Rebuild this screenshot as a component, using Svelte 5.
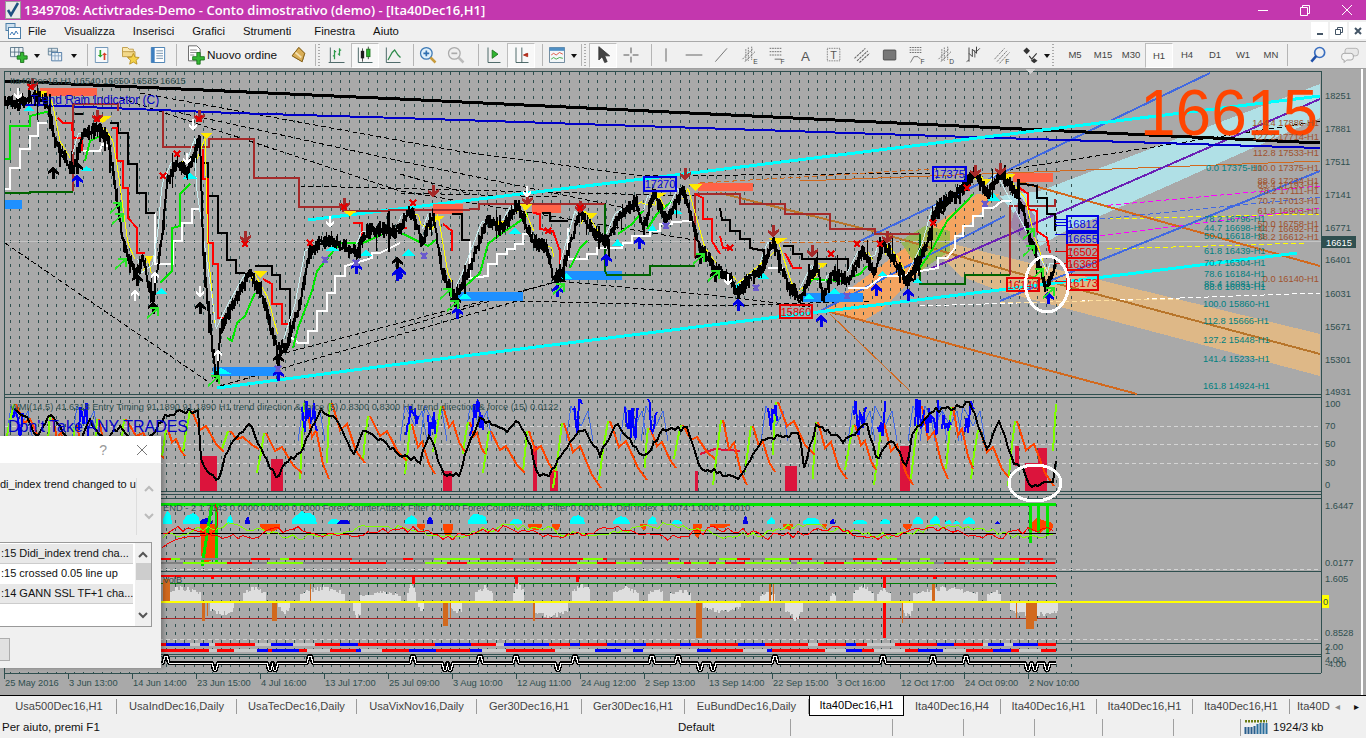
<script>
  // small seeded rng so the noisy series stay the same between renders
  function rng(seed) {
    let s = seed;
    return () => {
      s = (s + 0x6d2b79f5) | 0;
      let t = Math.imul(s ^ (s >>> 15), 1 | s);
      t = (t + Math.imul(t ^ (t >>> 7), 61 | t)) ^ t;
      return ((t ^ (t >>> 14)) >>> 0) / 4294967296;
    };
  }
  const parse = (str) => str.trim().split(/\s+/).map((p) => p.split(',').map(Number));
  function at(pts, x) {
    if (x <= pts[0][0]) return pts[0][1];
    for (let i = 1; i < pts.length; i++) {
      if (x <= pts[i][0]) {
        const [x0, y0] = pts[i - 1], [x1, y1] = pts[i];
        return y0 + ((y1 - y0) * (x - x0)) / (x1 - x0 || 1);
      }
    }
    return pts[pts.length - 1][1];
  }

  const priceKeys = parse(`5,100 20,103 30,95 47,100 55,140 73,170 83,133 100,127 108,140 113,170 123,243 137,273 143,257 153,303 157,267 163,230 167,183 177,160 187,173 200,137 203,250 208,303 217,387 220,330 233,303 250,273 263,297 277,350 287,343 300,303 310,250 330,237 357,253 367,230 400,230 407,213 413,213 422,243 433,213 443,273 455,297 467,273 487,220 503,227 517,203 533,240 547,247 553,277 563,270 580,210 593,230 607,243 620,213 637,200 643,230 653,193 667,220 683,187 700,247 715,267 730,277 737,293 750,277 763,267 773,240 787,283 800,297 817,263 823,297 833,273 848,280 863,250 875,273 883,243 893,257 907,283 927,243 937,207 960,190 975,173 987,193 1000,173 1020,197 1030,237 1037,257 1045,285 1050,280 1055,262`);

  const r1 = rng(11);
  let price = '', wicks = '', yellow = '', pale = '';
  for (let x = 5; x <= 1056; x += 1.25) {
    const y = at(priceKeys, x);
    const tall = r1() < 0.1 ? 2.4 : 1;
    price += `${x},${(y + (r1() - 0.5) * 12).toFixed(1)} `;
    const top = y - r1() * 9 * tall, bottom = y + r1() * 9 * tall;
    wicks += `M${x} ${top.toFixed(0)}V${bottom.toFixed(0)} `;
    const slope = at(priceKeys, x + 3) - at(priceKeys, x - 3);
    const off = slope > 0 ? at(priceKeys, x - 5) : at(priceKeys, x + 5);
    const cmd = Math.abs(slope) > 5 ? 'L' : 'M';
    if (slope > 0) yellow += `${cmd}${x} ${off.toFixed(1)} `;
    else pale += `${cmd}${x} ${off.toFixed(1)} `;
  }

  const steps = [
    // brown
    { c: '#a52a2a', w: 2, p: '73,190 73,103 118,103 118,110' },
    { c: '#a52a2a', w: 2, p: '163,110 163,146 209,146 209,138 254,138 254,177 299,177 299,206 343,206 343,210 377,210 400,209 462,209 479,208 479,203 605,203' },
    { c: '#a52a2a', w: 2, p: '695,257 695,193 740,193 740,203 785,203 785,213 830,213 830,228 875,228 875,233 920,233' },
    { c: '#a52a2a', w: 2, p: '1010,274 1010,205 1055,205 1055,198' },
    // dark green
    { c: '#006400', w: 2, p: '5,192 30,192 30,191 73,191' },
    { c: '#006400', w: 2, p: '605,203 605,270 607,274 650,274 650,265 695,265' },
    { c: '#006400', w: 2, p: '920,233 920,283 965,283 965,274 1010,274' },
    // white
    { c: '#fff', w: 2, p: '5,188 10,188 10,167 20,167 20,148 30,148 30,135 38,135 38,122 47,122' },
    { c: '#fff', w: 2, p: '83,150 100,150 102,143 108,145' },
    { c: '#fff', w: 2, p: '155,212 155,263 173,263 173,240 182,240 182,222 192,222 192,208 200,208' },
    { c: '#fff', w: 2, p: '290,335 298,342 308,342 308,330 317,330 317,310 327,310 327,292 335,292 335,275 345,275 345,265 372,257 372,252 380,252 390,247 400,242' },
    { c: '#fff', w: 2, p: '470,240 470,277 488,275 488,263 497,263 497,253 507,253 507,248 515,248 515,243 523,243 523,233 532,233' },
    { c: '#fff', w: 2, p: '568,227 568,258 587,258 587,253 597,253 597,247 622,247 623,242 632,242 632,235 650,235 650,230 660,230 660,223 672,223 672,221 693,220' },
    { c: '#fff', w: 2, p: '768,267 783,267' },
    { c: '#fff', w: 2, p: '848,287 867,287 883,275 902,275 920,270 938,267 938,257 947,257 955,247 955,235 963,235 963,225 973,225 973,215 983,215 983,207 993,207 1002,200 1012,200' },
    // green
    { c: '#00e600', w: 2, p: '5,158 10,158 10,125 30,125 30,115 50,110' },
    { c: '#00e600', w: 2, p: '85,160 90,140 100,135' },
    { c: '#00e600', w: 2, p: '160,282 172,270 172,227 180,225 180,193 190,183' },
    { c: '#00e600', w: 2, p: '227,337 232,340 237,322 245,315 255,292' },
    { c: '#00e600', w: 2, p: '293,347 298,327 312,290 317,270 340,242 363,242 383,233 397,230 428,245 437,238' },
    { c: '#00e600', w: 2, p: '463,287 480,272 488,243 498,235 520,220 528,213' },
    { c: '#00e600', w: 2, p: '570,267 580,247 587,240' },
    { c: '#00e600', w: 2, p: '618,233 632,223 643,210' },
    { c: '#00e600', w: 2, p: '647,228 657,213 672,200' },
    { c: '#00e600', w: 2, p: '803,290 813,278 840,280 860,273 867,265' },
    { c: '#00e600', w: 2, p: '920,267 933,247 947,220 967,200 973,193' },
    // black
    { c: '#000', w: 2, p: '75,113 83,113' },
    { c: '#000', w: 2, p: '110,122 118,122 118,132 128,132 128,163 137,163 137,192 146,192 146,212 155,212' },
    { c: '#000', w: 2, p: '200,162 208,162 208,195 218,195 218,232 227,232 227,259 236,259 236,272 245,272' },
    { c: '#000', w: 2, p: '255,265 272,265 272,274 280,274 280,288 290,288 290,333' },
    { c: '#000', w: 2, p: '452,213 462,213 462,239 470,239' },
    { c: '#000', w: 2, p: '542,212 550,212 550,220 568,220' },
    { c: '#000', w: 2, p: '720,207 722,219 730,219 730,230 740,230 740,238 750,238 750,247 765,250' },
    { c: '#000', w: 2, p: '783,245 793,245 793,253 802,253 802,258 848,258 848,270' },
    { c: '#000', w: 2, p: '1017,182 1037,185 1037,197 1047,197 1047,213 1055,213 1055,230' },
    // red
    { c: '#f00', w: 2, p: '58,117 63,122 72,122 73,137 82,137 82,150' },
    { c: '#f00', w: 2, p: '112,127 117,127 117,160 123,160 123,187 128,187 128,217 137,227 137,252 145,252' },
    { c: '#f00', w: 2, p: '203,148 203,178 208,178 208,242 213,242 213,263 218,263 218,317 227,317' },
    { c: '#f00', w: 2, p: '263,278 272,283 272,303 282,303 282,323 288,323' },
    { c: '#f00', w: 2, p: '353,222 362,222 362,237' },
    { c: '#f00', w: 2, p: '400,227 407,227' },
    { c: '#f00', w: 2, p: '443,223 452,230 452,250' },
    { c: '#f00', w: 2, p: '533,212 540,213 540,228 553,230 560,250 560,263' },
    { c: '#f00', w: 2, p: '695,193 703,197 703,218 712,218 712,240 720,253' },
    { c: '#f00', w: 2, p: '720,235 723,247 730,247' },
    { c: '#f00', w: 2, p: '785,252 793,267 802,267' },
    { c: '#f00', w: 2, p: '1017,185 1028,193 1028,208 1037,210 1037,230 1047,237 1050,252' }
  ];

  const straight = [
    { c: '#b8752a', w: 2, p: '720,192 873,230 1010,270 1320,353' },
    { c: '#d2691e', w: 2, p: '1020,181 1320,265' },
    { c: '#d2691e', w: 2, p: '827,310 1137,393' },
    { c: '#d2691e', w: 1, p: '830,313 910,390' },
    { c: '#d2691e', w: 1, p: '800,180 1320,160' },
    { c: '#4169e1', w: 2, p: '860,240 1210,72' },
    { c: '#4169e1', w: 2, p: '820,310 1005,215' },
    { c: '#4169e1', w: 2, p: '1000,300 1320,170' },
    { c: '#6a1fb5', w: 2, p: '930,268 1320,98' },
    { c: '#000', w: 3, p: '5,80 400,98 1000,127 1320,142' },
    { c: '#0000c8', w: 2, p: '10,103 233,112 400,117 1000,137 1320,147' },
    { c: '#00ffff', w: 3, p: '308,219 1320,95' },
    { c: '#00ffff', w: 3, p: '217,387 400,363 720,323 1007,288 1297,252' }
  ];

  const dashed = [
    { c: '#000', p: '5,242 207,380' },
    { c: '#000', p: '163,108 400,160 640,210' },
    { c: '#000', p: '120,97 400,190 700,240' },
    { c: '#000', p: '140,92 457,150 643,175 935,172' },
    { c: '#000', p: '400,173 470,193' },
    { c: '#000', p: '300,185 700,195' },
    { c: '#000', p: '400,192 560,196' },
    { c: '#000', p: '400,327 557,280 720,295 810,306' },
    { c: '#000', p: '220,385 517,300 720,305 870,300' },
    { c: '#000', p: '285,352 560,280' },
    { c: '#000', p: '1000,170 1320,120' },
    { c: '#d2691e', p: '700,182 935,168' },
    { c: '#d2691e', p: '760,242 900,240' },
    { c: '#ffff00', p: '1107,248 1307,242' },
    { c: '#ffff00', p: '1100,218 1320,213' },
    { c: '#ff00ff', p: '1100,205 1320,185' },
    { c: '#ff00ff', p: '1100,235 1320,207' },
    { c: '#4169e1', p: '1100,218 1320,196' },
    { c: '#fff', p: '1180,297 1320,292' },
    { c: '#fff', p: '920,305 1180,297' },
    { c: '#ffe0a0', p: '1000,302 1180,298' }
  ];

  const gridX = [1071];
  for (let x = 1055.5; x > 4; x -= 9.17) gridX.push(Math.round(x) + 0.5);

  const dnArrows = [[32,80],[97,112],[199,112],[245,233],[344,200],[433,187],[527,195],[580,203],[685,170],[773,227],[812,247],[887,233],[975,167],[1000,165]];
  const upArrows = [[77,173],[278,367],[356,260],[397,267],[400,265],[457,305],[557,283],[606,252],[639,235],[738,297],[821,313],[876,282],[908,287],[1048,290]];
  const blackArrows = [[53,165],[77,160],[137,272],[153,300],[200,300],[278,352],[397,255],[455,293],[557,272],[700,250],[715,268],[738,285],[908,272],[938,205],[955,190]];
  const purpleX = [[325,259],[424,255],[666,225],[756,287],[847,295],[985,203],[278,368],[356,262]];
  const redX = [[31,86],[97,118],[199,118],[245,243],[344,206],[177,153],[163,175],[310,242],[413,202],[548,230],[580,207],[730,247],[831,253],[857,243],[880,243],[933,222],[967,187]];
  const whiteDn = [[18,92],[193,123],[187,157],[330,220],[200,290],[728,278],[527,190]];
  const whiteUp = [[155,272],[218,350],[135,290]];
  const limeArrows = [[115,207],[117,218],[120,263],[152,312],[213,380],[445,293],[452,305],[558,288],[698,258],[713,275],[1028,233],[1028,250],[1037,273],[1048,292]];
  const yellowTri = [[33,90,47,97],[93,115,112,122],[200,132,212,138],[253,270,267,277],[343,210,357,215],[145,255,153,263],[432,215,445,220],[490,220,507,227],[520,203,532,210],[585,212,598,218],[650,192,667,197],[688,183,702,190],[768,237,788,243],[817,262,827,267],[977,178,992,185],[1002,173,1015,180]];
  const cyanTri = [[80,165,93,170],[23,105,35,110],[182,172,198,178],[155,287,167,293],[325,245,340,250],[360,248,372,255],[210,367,232,373],[402,248,415,255],[508,227,522,233],[612,238,623,245],[648,223,657,230],[670,208,683,213],[560,272,572,278],[458,292,472,298],[757,272,770,278],[732,282,745,288],[803,293,815,298],[828,287,840,293],[877,270,887,275],[912,277,923,282],[987,192,1000,200]];
  const salmon = [[40,87,57,8],[433,203,30,10],[532,202,29,10],[698,182,55,8],[1013,172,40,9]];
  const dodger = [[5,199,17,9],[213,366,64,9],[458,291,65,9],[560,270,62,9],[803,292,60,9]];

  const tags = [
    { t: '17270', x: 644, y: 176, w: 32, h: 14, c: '#0000e6' },
    { t: '17375', x: 933, y: 166, w: 33, h: 14, c: '#0000e6' },
    { t: '15860', x: 780, y: 304, w: 32, h: 13, c: '#e60000' },
    { t: '16140', x: 1007, y: 277, w: 32, h: 13, c: '#e60000' },
    { t: '16812', x: 1067, y: 215, w: 31, h: 15, c: '#0000e6' },
    { t: '16655', x: 1067, y: 232, w: 31, h: 12, c: '#0000e6' },
    { t: '16502', x: 1067, y: 244, w: 31, h: 13, c: '#e60000' },
    { t: '16368', x: 1067, y: 257, w: 31, h: 12, c: '#e60000' },
    { t: '16173', x: 1067, y: 274, w: 31, h: 15, c: '#e60000' }
  ];

  const fibL = [['0.0 17375-H1',1206,170],['78.2 16796-H1',1204,221],['44.7 16698-H1',1204,230],['50.0 16618-H1',1204,238],['61.8 16439-H1',1204,253],['70.7 16304-H1',1204,265],['78.6 16184-H1',1204,276],['85.4 16081-H1',1204,286],['88.6 16033-H1',1204,289],['100.0 15860-H1',1203,306],['112.8 15666-H1',1203,323],['127.2 15448-H1',1203,342],['141.4 15233-H1',1203,361],['161.8 14924-H1',1203,388]];
  const fibR = [['144.4 17886-H1',125],['127.2 17714-H1',139],['112.8 17533-H1',155],['100.0 17375-H1',170],['88.6 17234-H1',183],['85.4 17193-H1',187],['78.2 17111-H1',193],['70.7 17013-H1',203],['61.8 16903-H1',213],['50.0 16758-H1',226],['44.7 16692-H1',231],['38.2 16612-H1',239],['0.0 16140-H1',281]];

  const axis = [['18251',98],['17881',131],['17511',164],['17141',197],['16771',230],['16401',262],['16031',296],['15671',329],['15301',362],['14931',394],['100',406],['70',428],['50',446],['30',465],['0',487],['1.6447',508],['0.0177',565],['1.605',581],['0.8528',635],['2.00',649],['1',653],['4.00',662],['-4.00',666]];
  const times = ['25 May 2016','3 Jun 13:00','14 Jun 14:00','23 Jun 15:00','4 Jul 16:00','13 Jul 17:00','25 Jul 09:00','3 Aug 10:00','12 Aug 11:00','24 Aug 12:00','2 Sep 13:00','13 Sep 14:00','22 Sep 15:00','3 Oct 16:00','12 Oct 17:00','24 Oct 09:00','2 Nov 10:00'];

  const paneLines = [70, 393, 396, 490, 493, 497, 570, 642, 653, 655, 672];

  // oscillator pane
  const blackKeys = parse(`15,408 25,415 37,437 50,412 60,425 75,450 90,420 105,440 120,425 140,450 155,430 167,413 180,410 200,410 200,457 210,473 217,480 230,443 250,423 263,453 277,477 287,460 300,453 320,410 337,420 353,453 363,430 377,437 400,453 420,460 430,433 443,473 460,473 467,447 480,417 507,430 517,417 530,443 537,473 550,473 570,440 583,427 600,453 617,423 643,457 663,430 687,427 700,467 713,470 740,477 753,453 765,437 800,433 803,470 817,423 843,440 867,423 877,460 890,437 900,453 907,467 913,430 933,410 950,407 970,402 977,420 987,447 1000,420 1007,443 1015,463 1023,467 1028,483 1038,487 1043,478 1053,483 1057,450`);
  const r5 = rng(61);
  let blackRsi = '';
  for (let x = 15; x <= 1057; x += 3) blackRsi += `${x},${(at(blackKeys, x) + (r5() - 0.5) * 5).toFixed(0)} `;

  const lows = [[200,217],[271,283],[443,452],[533,537],[553,558],[695,698],[785,797],[900,910],[1025,1047]];
  // sawtooth: quick lime rises, slower wobbling orange falls
  function saw(seed) {
    const r = rng(seed);
    let x = 5, limeP = '', orangeP = '';
    while (x < 1052) {
      const low = lows.some(([a, b]) => x >= a && x <= b);
      const bottom = low ? 487 : 445 + r() * 40;
      const peak = 401 + r() * 32;
      const rise = 3 + r() * 6, fall = 14 + r() * 24;
      limeP += `M${x.toFixed(0)} ${bottom.toFixed(0)}L${(x + rise * 0.5).toFixed(0)} ${(bottom - (bottom - peak) * 0.5).toFixed(0)}L${(x + rise).toFixed(0)} ${peak.toFixed(0)}`;
      const x0 = x + rise + 2, d = bottom - peak;
      orangeP += `M${x0.toFixed(0)} ${peak.toFixed(0)}L${(x0 + fall * 0.25).toFixed(0)} ${(peak + d * 0.45).toFixed(0)}L${(x0 + fall * 0.45).toFixed(0)} ${(peak + d * 0.35).toFixed(0)}L${(x0 + fall * 0.75).toFixed(0)} ${(peak + d * 0.8).toFixed(0)}L${(x0 + fall).toFixed(0)} ${bottom.toFixed(0)}`;
      x += rise + fall;
    }
    return { limeP: limeP + 'M1053 450L1056 403', orangeP };
  }
  const { limeP, orangeP } = saw(7);

  const r2 = rng(21);
  const blueCl = [[18,6],[84,5],[310,8],[412,6],[432,4],[477,7],[578,5],[632,7],[653,5],[773,5],[860,6],[882,4],[920,5],[932,6],[947,5],[970,5]];
  let blueThick = '';
  for (const [c, hw] of blueCl) {
    blueThick += 'M';
    for (let x = c - hw; x <= c + hw; x += 1.5) blueThick += `${x} ${(398 + r2() * 40).toFixed(0)} `;
  }
  let blueThin = '';
  for (const [c] of blueCl) {
    blueThin += `M${c - 12} 440 L${c - 7} 405 L${c + 3} 425 L${c + 10} 410 L${c + 15} 440 `;
  }
  const crimsonBlocks = [[200,455,17,35],[271,458,12,32],[443,470,9,20],[533,445,4,45],[550,470,8,20],[695,470,3,20],[785,465,12,25],[900,445,10,45],[1015,445,4,20],[1025,462,13,28],[1038,447,9,43]];

  // lower panes
  const cyanHills = [[163,172,12],[183,200,10],[227,233,8],[292,317,12],[328,340,5],[405,417,8],[468,487,10],[510,522,5],[570,585,9],[613,630,7],[648,657,7],[672,682,4],[767,775,7],[803,820,6],[853,867,4],[880,890,5],[913,923,7],[930,940,8],[945,952,4],[953,960,3],[963,975,6]];
  const blueHills = [[200,212,6],[245,250,8],[427,433,7],[337,350,4],[743,748,7],[830,835,6],[995,1000,3]];
  const redHills = [[443,453,12],[417,425,6],[528,542,6],[552,560,6],[640,647,6],[693,702,12],[710,730,4],[783,793,6],[822,827,5],[260,280,7],[903,912,6],[1045,1053,8]];
  const r6 = rng(71);
  // lumpy mountain instead of a plain triangle
  function hill(a, b, h, base, dir) {
    const mid = (a + b) / 2, half = (b - a) / 2;
    let s = `${a},${base} `;
    for (let x = a; x <= b; x += 2) {
      const env = 1 - Math.pow(Math.abs(x - mid) / half, 2) * 0.6;
      s += `${x},${(base - dir * h * 1.15 * env * (0.8 + r6() * 0.2)).toFixed(0)} `;
    }
    return s + `${b},${base}`;
  }

  const r3 = rng(31);
  let redWave = '', limeWave = '';
  for (let x = 163; x <= 1056; x += 5) {
    redWave += `${x},${(532 + Math.sin(x / 17) * 4 + (r3() - 0.5) * 7).toFixed(1)} `;
    limeWave += `${x},${(530 + Math.sin(x / 23 + 1) * 5 + (r3() - 0.5) * 7).toFixed(1)} `;
  }

  function segRow(seed, colors) {
    const r = rng(seed);
    const out = [];
    let x = 5;
    while (x < 1056) {
      const w = 3 + r() * 26;
      const c = colors[Math.floor(r() * colors.length)];
      out.push([x, Math.min(w, 1056 - x), c]);
      x += w;
    }
    return out;
  }
  const row1 = segRow(41, ['#ff0000', '#0000ff', '#c8c8c8', '#ff0000', '#0000ff']);
  const row2 = segRow(42, ['#ff0000', '#0000ff', '#c8c8c8']);
  const row3 = segRow(43, ['#7fff00', '#808080', '#808080', '#ff0000']);
  const row4 = segRow(44, ['#7fff00', '#808080', '#ff0000']);

  const grayUp = [[163,200,12],[243,265,12],[300,345,12],[360,400,8],[407,415,15],[475,493,12],[513,523,14],[572,590,15],[613,638,12],[648,663,12],[670,690,10],[760,775,8],[830,835,8],[853,873,13],[877,890,12],[913,977,12],[987,1000,10]];
  const grayDn = [[418,423,10],[450,462,12],[535,567,15],[703,740,10],[785,803,15],[210,233,12],[278,290,10],[353,360,15],[902,912,14],[1010,1057,14]];
  const r4 = rng(51);
  const bars = (list, dir) => {
    const out = [];
    for (const [a, b, h] of list) {
      const mid = (a + b) / 2, half = (b - a) / 2;
      for (let x = a; x < b; x += 1.5) {
        const env = 1 - (Math.abs(x - mid) / half) * 0.4;
        out.push([x, h * 1.35 * env * (0.65 + r4() * 0.35) * dir]);
      }
    }
    return out;
  };
  const grayBars = [...bars(grayUp, -1), ...bars(grayDn, 1)];
  const orangeBars = [[163,578,7,22],[202,600,3,20],[207,600,1,15],[272,600,5,20],[310,583,1,17],[443,600,5,25],[450,600,1,17],[533,600,2,20],[696,600,6,37],[769,583,2,17],[773,583,1,17],[932,583,3,17],[902,600,1,22],[1016,600,1,17],[1026,600,8,28],[1034,600,3,20]];
  const redSpikes = [[413,574,583],[516,574,583],[577,574,581],[678,574,577],[884,574,587],[934,574,578],[212,574,578]];

  const pulses = [166, 310, 413, 480, 516, 575, 652, 678, 775, 883, 933, 966];
  const dips = [215, 270, 275, 445, 450, 558, 700, 713, 1028, 1035, 1047];
  let status = 'M162 662';
  const evs = [...pulses.map((x) => [x, -7]), ...dips.map((x) => [x, 7])].sort((a, b) => a[0] - b[0]);
  for (const [x, d] of evs) status += ` L${x - 3} 662 L${x - 1} ${662 + d} L${x + 1} ${662 + d} L${x + 3} 662`;
  status += ' L1056 662';

  // toolbar
  const ico = {
    newchart: `<path d="M3 3h15v11H3z" fill="#eef3f5" stroke="#4d6b80"/><path d="M3 8.500h15M8 3v11M13 3v11" stroke="#4d6b80" fill="none"/><path d="M11 13h4V9h4v4h4v4h-4v4h-4v-4h-4z" fill="#34b834" stroke="#176e17"/>`,
    profile: `<path d="M4 4h11v8H4z" fill="#dfe8ee" stroke="#5a7a90"/><path d="M4 7.500h11M8 4v8" stroke="#5a7a90"/><path d="M8 9h12v10H8z" fill="#eef3f6" stroke="#3c6c9c"/><path d="M8 13h12M12 9v10M16 9v10" stroke="#7fa0c0"/>`,
    market: `<path d="M4 3h15v18H4z" fill="#f6f9fb" stroke="#5b87ad"/><path d="M9 6v6H7l3 3 3-3h-2V6z" fill="#29a829"/><path d="M13 18v-6h-2l3-3 3 3h-2v6z" fill="#d8402a" transform="translate(1 0)"/>`,
    nav: `<path d="M3 6h6l2 2h7v6H3z" fill="#f3d98a" stroke="#b8933a"/><path d="M3 3h6l2 2h5v3H3z" fill="#fbe9b0" stroke="#b8933a"/><path d="M16 10l2 4.500 5 .5-3.700 3.300 1.100 4.700-4.400-2.500-4.400 2.500 1.100-4.700L9 15l5-.5z" fill="#f4d24a" stroke="#b58a18"/>`,
    term: `<path d="M4 3h16v18H4z" fill="#fff" stroke="#2f6fa8"/><path d="M4 3h4v18H4z" fill="#3d7fc0"/><path d="M10 7h8M10 10h8M10 13h8M10 16h8" stroke="#5b7fa0"/>`,
    order: `<path d="M3 1h10l4 4v14H3z" fill="#fff" stroke="#555"/><path d="M5 6h8M5 9h8M5 12h5" stroke="#777"/><path d="M9 15h5v-5h4v5h5v4h-5v5h-4v-5H9z" transform="translate(-1 -1)" fill="#34b834" stroke="#176e17"/>`,
    gold: `<path d="M5 13l8-10 7 7-3 10z" fill="#c89b3c" stroke="#7d5a14"/><path d="M5 13l12 7 3-10-7-7z" fill="#d9ae57" stroke="#7d5a14"/><path d="M9 9l7 6" stroke="#f3dfae" stroke-width="2"/>`,
    bars: `<path d="M4 3v18h17M4 21H2" fill="none" stroke="#2f4f4f"/><path d="M9 6v11M9 13H7M9 8h2M15 4v9M15 11h-2M15 6h2" fill="none" stroke="#2d9a4a" stroke-width="1.500"/>`,
    candle: `<path d="M4 3v18h17" fill="none" stroke="#2f4f4f"/><path d="M9 4v16M16 2v15" stroke="#333"/><rect x="7" y="7" width="4" height="9" fill="#1d1d1d"/><rect x="14" y="5" width="4" height="9" fill="#2fb52f" stroke="#176e17"/>`,
    line: `<path d="M4 3v18h17" fill="none" stroke="#2f4f4f"/><path d="M6 18l5-9 3-3 4 6 3 3" fill="none" stroke="#2d8a4a" stroke-width="1.500"/>`,
    zin: `<circle cx="10" cy="10" r="7" fill="#dff0fb" stroke="#3c78b4" stroke-width="1.500"/><path d="M6.500 10h7M10 6.500v7" stroke="#2f6fb0" stroke-width="2"/><path d="M15 15l6 6" stroke="#c89b3c" stroke-width="3"/>`,
    zout: `<circle cx="10" cy="10" r="7" fill="#eee" stroke="#aaa" stroke-width="1.500"/><path d="M6.500 10h7" stroke="#aaa" stroke-width="2"/><path d="M15 15l6 6" stroke="#bbb" stroke-width="3"/>`,
    scroll: `<path d="M6 3v18h15" fill="none" stroke="#2f4f4f"/><path d="M11 6l7 5-7 5z" fill="#2fb52f" stroke="#176e17"/>`,
    shift: `<path d="M6 3v18h15M13 3v18" fill="none" stroke="#2f4f4f"/><path d="M20 11h-3M20 10l-5 2 5 2z" fill="#d8402a" stroke="#a02010"/>`,
    ind: `<path d="M3 3h18v18H3z" fill="#f2f6f8" stroke="#5a7a90"/><path d="M3 3h18v4H3z" fill="#4f8fc4"/><path d="M5 12l3-2 3 2 4-3 4 2" stroke="#d8402a" fill="none"/><path d="M5 17l3-2 3 2 4-2 4 1" stroke="#2fa02f" fill="none"/>`,
    cursor: `<path d="M7 2v16l4-4 3 7 3-1-3-7h6z" fill="#444" stroke="#333"/>`,
    cross: `<path d="M12 3v7M12 14v7M3 12h7M14 12h7" stroke="#555" stroke-width="1.200"/>`,
    vline: `<path d="M12 4v16" stroke="#666" stroke-width="1.200"/>`,
    hline: `<path d="M2 12h20" stroke="#666" stroke-width="1.200"/>`,
    trend: `<path d="M4 20L18 4" stroke="#777" stroke-width="1.200"/>`,
    echan: `<path d="M3 17L15 5M6 20L18 8M10 3v16M14 2v16M7 5v15" stroke="#666" stroke-dasharray="2 1" fill="none"/><text x="16" y="23" font-size="8" fill="#444" font-family="Liberation Sans">E</text>`,
    fret: `<path d="M2 4h14M2 8h14M2 12h14" stroke="#555" stroke-dasharray="2 1"/><path d="M8 17h8" stroke="#555"/><text x="15" y="23" font-size="8" fill="#444" font-family="Liberation Sans">F</text>`,
    atext: `<text x="6" y="19" font-size="16" fill="#555" font-family="Liberation Sans">A</text>`,
    ttext: `<rect x="4" y="4" width="15" height="15" fill="none" stroke="#555" stroke-dasharray="1 1"/><text x="7.500" y="17" font-size="13" fill="#555" font-family="Liberation Sans">T</text>`,
    chan: `<path d="M3 16L16 4M6 19L19 7M9 21L21 10" stroke="#666" stroke-width="1.300" stroke-dasharray="3 1" fill="none"/>`,
    rect: `<rect x="4" y="6" width="15" height="12" rx="1" fill="#777" stroke="#444"/>`,
    ffan: `<path d="M2 3h15M2 6h15M2 9h15" stroke="#555" stroke-dasharray="2 1"/><path d="M3 21l4-7h5l3 3" fill="none" stroke="#666"/><text x="15" y="23" font-size="8" fill="#444" font-family="Liberation Sans">F</text>`,
    dchan: `<path d="M3 17L15 5M6 20L18 8M10 3v16M14 2v16M7 5v15" stroke="#666" stroke-dasharray="2 1" fill="none"/><text x="16" y="23" font-size="8" fill="#444" font-family="Liberation Sans">D</text>`,
    wave: `<path d="M6 3v17M6 10l4 4V5l5 5V2M15 8l4-4" fill="none" stroke="#444" stroke-width="1.200"/><path d="M3 20l3-2M13 15v-9" stroke="#444"/>`,
    fchan: `<path d="M3 17L15 4M6 20L18 7M9 22L21 9" stroke="#666" stroke-dasharray="3 1" fill="none"/><text x="16" y="23" font-size="8" fill="#444" font-family="Liberation Sans">F</text>`,
    arrows: `<path d="M8 3l4 4-4 4-4-4z" fill="#333"/><path d="M11 13l3 4 6-7" stroke="#333" fill="none" stroke-width="1.300"/><path d="M17 16l4 3-4 3-4-3z" fill="#333"/>`,
    search: `<circle cx="14" cy="9" r="6" fill="none" stroke="#3a6fc0" stroke-width="2"/><path d="M10 13l-6 7" stroke="#2050a8" stroke-width="3"/>`,
    chat: `<path d="M9 4h10a3 3 0 0 1 3 3v3a3 3 0 0 1-3 3h-4l-2 3v-3H9a3 3 0 0 1-3-3V7a3 3 0 0 1 3-3z" fill="#e8e8e8" stroke="#aaa"/><path d="M5 10h8a3 3 0 0 1 3 3v2a3 3 0 0 1-3 3H8l-3 3v-3a3 3 0 0 1-3-3v-2a3 3 0 0 1 3-3z" fill="#f4f4f4" stroke="#999"/>`
  };

  const tools = [
    ['b', 'newchart'], ['dd'], ['b', 'profile'], ['dd'], ['sep', 'w10'], ['b', 'market'], ['b', 'nav'], ['b', 'term'], ['sep', 'w5'],
    ['order'], ['b', 'gold'], ['sep', 'w4'], ['grip', 'w7'],
    ['b', 'bars'], ['b', 'candle', true], ['b', 'line'], ['sep', 'w7'], ['b', 'zin'], ['b', 'zout'], ['sep', 'w9'], ['b', 'scroll'], ['b', 'shift', true], ['sep', 'w8'], ['b', 'ind'], ['dd', 'small'], ['sep', 'w5'], ['grip', 'w7'],
    ['b', 'cursor', true], ['b', 'cross'], ['sep', 'w7'], ['b', 'vline'], ['b', 'hline'], ['b', 'trend'], ['b', 'echan'], ['b', 'fret'], ['b', 'atext'], ['b', 'ttext'], ['b', 'chan'], ['b', 'rect'], ['b', 'ffan'], ['b', 'dchan'], ['b', 'wave'], ['b', 'fchan'], ['b', 'arrows'], ['dd', 'small'], ['grip', 'w11']
  ];
  const periods = ['M5', 'M15', 'M30', 'H1', 'H4', 'D1', 'W1', 'MN'];
  const tabs = [
    ['Usa500Dec16,H1', 'w115'], ['UsaIndDec16,Daily', 'w120'], ['UsaTecDec16,Daily', 'w120'], ['UsaVixNov16,Daily', 'w120'],
    ['Ger30Dec16,H1', 'w105'], ['Ger30Dec16,H1', 'w103'], ['EuBundDec16,Daily', 'w124'], ['Ita40Dec16,H1', 'active'],
    ['Ita40Dec16,H4', 'w97'], ['Ita40Dec16,H1', 'w96'], ['Ita40Dec16,H1', 'w96'], ['Ita40Dec16,H1', 'w97']
  ];
  const statusCells = ['w115', 'w102', 'w71', 'w71', 'w68', 'w71', 'w67'];
</script>

<div class="app">
  <header class="title">
    <svg class="logo" width="16" height="18" viewBox="0 0 16 18">
      <rect x="0.500" y="0.500" width="15" height="17" fill="#e9e9e9" stroke="#9a9a9a" />
      <path d="M3 9l3 5 7-12" fill="none" stroke="#1d4f80" stroke-width="2.500" />
    </svg>
    <span class="title-text">1349708: Activtrades-Demo - Conto dimostrativo (demo) - [Ita40Dec16,H1]</span>
    <div class="win">
      <svg width="12" height="12" viewBox="0 0 12 12"><path d="M1 6.500h10" stroke="#fff" /></svg>
      <svg width="12" height="12" viewBox="0 0 12 12"><path d="M1.500 3.500h7v8h-7zM3.500 3.500v-2h7v8h-2" fill="none" stroke="#fff" /></svg>
      <svg width="12" height="12" viewBox="0 0 12 12"><path d="M1 1l10 10M11 1L1 11" stroke="#fff" /></svg>
    </div>
  </header>

  <nav class="menu">
    <svg class="mdi" width="16" height="16" viewBox="0 0 16 16">
      <rect x="1" y="0.500" width="9" height="7" fill="#cfe0ee" stroke="#4d7fa8" />
      <rect x="3.500" y="4.500" width="12" height="11" fill="#fff" stroke="#4d7fa8" />
      <path d="M5 12l2-3 2 3 2-4 2 3" fill="none" stroke="#3c78b4" />
    </svg>
    <span>File</span><span>Visualizza</span><span>Inserisci</span><span>Grafici</span><span class="wide">Strumenti</span><span>Finestra</span><span>Aiuto</span>
    <div class="mdi-btns">
      <button aria-label="riduci"><svg width="10" height="10" viewBox="0 0 10 10"><path d="M2 8h6" stroke="#456" stroke-width="2" /></svg></button>
      <button aria-label="ripristina"><svg width="10" height="10" viewBox="0 0 10 10"><path d="M1.500 3.500h5v5h-5zM3.500 3.500v-2h5v5h-2" fill="none" stroke="#456" /></svg></button>
      <button aria-label="chiudi"><svg width="10" height="10" viewBox="0 0 10 10"><path d="M2 2l6 6M8 2L2 8" stroke="#456" stroke-width="2" /></svg></button>
    </div>
  </nav>

  <div class="toolbar">
    {#each tools as t}
      {#if t[0] === 'b'}
        <div class="tool" class:on={t[2]}><svg width="20" height="20" viewBox="0 0 24 24">{@html ico[t[1]]}</svg></div>
      {:else if t[0] === 'dd'}
        <div class="dd" class:small={t[1]}><i></i></div>
      {:else if t[0] === 'sep'}
        <div class="sep {t[1]}"></div>
      {:else if t[0] === 'grip'}
        <div class="grip {t[1]}"></div>
      {:else}
        <div class="order">
          <svg width="20" height="20" viewBox="0 0 24 24">{@html ico.order}</svg>
          <span>Nuovo ordine</span>
        </div>
      {/if}
    {/each}
    {#each periods as p}
      <div class="period" class:on={p === 'H1'}>{p}</div>
    {/each}
    <div class="sep w3"></div>
    <div class="tool push"><svg width="20" height="20" viewBox="0 0 24 24">{@html ico.search}</svg></div>
    <div class="tool chat"><svg width="20" height="20" viewBox="0 0 24 24">{@html ico.chat}</svg></div>
  </div>

  <main class="chart">
    <svg class="plot" width="1366" height="626" viewBox="0 68 1366 626">
      <rect x="1361" y="68" width="2" height="626" fill="#fff" />

      <!-- bands -->
      <polygon points="1320,83 1320,117 1062,232 1040,245 1000,195 1040,190" fill="#b0e0e6" />
      <polygon points="920,235 1320,333 1320,375 1000,290 960,275" fill="#deb887" />
      <polygon points="847,290 977,193 1000,193 880,310 863,320 823,310" fill="#f4a460" />
      <polygon points="900,240 925,225 950,230 950,250 920,270" fill="#8fb84a" opacity="0.8" />
      <polygon points="1020,195 1035,215 1040,260 1010,225" fill="#9c7fa8" opacity="0.8" />

      <!-- grid -->
      {#each gridX as x}
        <line x1={x} x2={x} y1="71" y2="672" class="grid" />
      {/each}
      {#each [425, 443, 462] as y}
        <line x1="5" x2="1321" y1={y} y2={y} class="soft" />
      {/each}
      <line x1="5" x2="1321" y1="568" y2="568" class="soft" />
      <line x1="5" x2="1321" y1="638" y2="638" class="soft" />
      <line x1="5" x2="1321" y1="240.500" y2="240.500" stroke="#c4c4c4" />
      {#each paneLines as y}
        <line x1="4" x2="1321" y1={y + 0.5} y2={y + 0.5} stroke="#2f4f4f" />
      {/each}
      <line x1="4.500" x2="4.500" y1="70" y2="672" stroke="#2f4f4f" />
      <line x1="1321.500" x2="1321.500" y1="70" y2="672" stroke="#2f4f4f" />

      <!-- price pane -->
      {#each dashed as d}
        <polyline points={d.p} fill="none" stroke={d.c} class="dash" />
      {/each}
      {#each straight as s}
        <polyline points={s.p} fill="none" stroke={s.c} stroke-width={s.w} />
      {/each}
      {#each dodger as b}
        <rect x={b[0]} y={b[1]} width={b[2]} height={b[3]} fill="#1e90ff" />
      {/each}
      {#each salmon as b}
        <rect x={b[0]} y={b[1]} width={b[2]} height={b[3]} fill="#ff6347" />
      {/each}
      {#each steps as s}
        <polyline points={s.p} fill="none" stroke={s.c} stroke-width={s.w} />
      {/each}
      <path d={yellow} fill="none" stroke="#ffff00" />
      <path d={pale} fill="none" stroke="#c8eef0" />
      {#each yellowTri as t}
        <polygon points="{t[0]},{t[1]} {t[2]},{t[1]} {(t[0] + t[2]) / 2},{t[3]}" fill="#ffe800" />
      {/each}
      {#each cyanTri as t}
        <polygon points="{(t[0] + t[2]) / 2},{t[1]} {t[2]},{t[3]} {t[0]},{t[3]}" fill="#00ffff" />
      {/each}
      <path d={wicks} fill="none" stroke="#000" stroke-width="1.500" />
      <polyline points={price} fill="none" stroke="#000" stroke-width="2" />

      {#each blackArrows as a}
        <path transform="translate({a[0]} {a[1]})" d="M-1.500 13h3v-7l4 3V6L0 0-5.500 6v3l4-3z" fill="#000" />
      {/each}
      {#each dnArrows as a}
        <path transform="translate({a[0]} {a[1]})" d="M-1.500 -3h3v7l4-3v3l-5.500 6-5.500-6v-3l4 3z" fill="#a52a2a" />
      {/each}
      {#each upArrows as a}
        <path transform="translate({a[0]} {a[1]})" d="M-1.500 13h3v-7l4 3V6L0 0-5.500 6v3l4-3z" fill="#0000e6" />
      {/each}
      {#each whiteDn as a}
        <path transform="translate({a[0]} {a[1]})" d="M-1 -5h2v7l3-2v2l-4 5-4-5v-2l3 2z" fill="#fff" />
      {/each}
      {#each whiteUp as a}
        <path transform="translate({a[0]} {a[1]})" d="M-1 10h2V3l3 2V3L0-2-4 3v2l3-2z" fill="#fff" />
      {/each}
      {#each limeArrows as a}
        <path transform="translate({a[0]} {a[1]})" d="M-5 5L5-4M-2-5H6V3" fill="none" stroke="#28e628" stroke-width="1.800" />
      {/each}
      {#each redX as a}
        <path transform="translate({a[0]} {a[1]})" d="M-3-3L3 3M3-3L-3 3" stroke="#e60000" stroke-width="2" />
      {/each}
      {#each purpleX as a}
        <path transform="translate({a[0]} {a[1]})" d="M-3-3L3 3M3-3L-3 3M0-3V3" stroke="#6a5acd" stroke-width="1.500" />
      {/each}

      <text x="1140" y="134" class="big">16615</text>
      <text x="10" y="83" class="lbl dark">Ita40Dec16,H1  16540 16650 16535 16615</text>
      <text x="31" y="103" class="trainind">Trend Rain Indicator (C)</text>

      {#each fibL as f}
        <text x={f[1]} y={f[2]} class="lbl teal">{f[0]}</text>
      {/each}
      {#each fibR as f}
        <text x="1319" y={f[1]} class="lbl rust">{f[0]}</text>
      {/each}
      {#each tags as g}
        <rect x={g.x} y={g.y} width={g.w} height={g.h} fill="none" stroke={g.c} stroke-width="1.500" />
        <text x={g.x + g.w / 2} y={g.y + g.h / 2 + 4} class="tag" fill={g.c}>{g.t}</text>
      {/each}
      <path d="M1055 218h12M1055 221h12M1055 224h12M1055 233h12" stroke="#0000e6" />
      <path d="M1055 250h12M1055 262h12M1055 280h12" stroke="#e60000" />
      <ellipse cx="1047" cy="283" rx="21.500" ry="28" fill="none" stroke="#fff" stroke-width="3" />

      <!-- oscillator pane -->
      {#each crimsonBlocks as c}
        <rect x={c[0]} y={c[1]} width={c[2]} height={c[3]} fill="#dc143c" />
      {/each}
      <polyline points="700,453 715,448 740,450" fill="none" stroke="#dc143c" stroke-width="2" />
      <path d={blueThin} fill="none" stroke="#4169e1" />
      <path d={limeP} fill="none" stroke="#7fff00" stroke-width="2" />
      <path d={orangeP} fill="none" stroke="#ff4500" stroke-width="2" />
      <path d={blueThick} fill="none" stroke="#0000ff" stroke-width="2" />
      <polyline points={blackRsi} fill="none" stroke="#000" stroke-width="2" />
      <text x="10" y="409" class="lbl dark">WMI(14,5) 41.6318  Entry Timing 91.1890 91.1890   H1 trend direction &amp; force (5) 0.8300 0.8300   H1 trend direction &amp; force (15) 0.0122</text>
      <text x="8" y="431" class="warn">Don't Take ANY TRADES</text>
      <ellipse cx="1035" cy="482" rx="26" ry="18" fill="none" stroke="#fff" stroke-width="3" />

      <!-- histogram pane -->
      <line x1="5" x2="1056" y1="503" y2="503" stroke="#00e600" stroke-width="3" />
      {#each cyanHills as h}
        <polygon points={hill(h[0], h[1], h[2], 523, 1)} fill="#00ffff" />
      {/each}
      {#each blueHills as h}
        <polygon points={hill(h[0], h[1], h[2], 523, 1)} fill="#0000e6" />
      {/each}
      {#each redHills as h}
        <polygon points={hill(h[0], h[1], h[2], 523, -1)} fill="#ff4500" />
      {/each}
      <polygon points="200,523 218,523 218,555 202,565" fill="#ff4500" />
      <polygon points="1027,528 1036,517 1053,522 1040,532" fill="#ff4500" />
      <path d="M202 565L212 503M216 503L216 562M1030 503V542M1038 503V532M1047 503V535" stroke="#00e600" stroke-width="3" fill="none" />
      <line x1="5" x2="1056" y1="532" y2="532" stroke="#000" />
      <polyline points={limeWave} fill="none" stroke="#7fff00" />
      <polyline points={redWave} fill="none" stroke="#f00" />
      <path d="M162 547Q175 535 200 535T215 503" fill="none" stroke="#f00" />
      {#each row3 as s}
        <rect x={s[0]} y="557" width={s[1]} height="2" fill={s[2]} />
      {/each}
      {#each row4 as s}
        <rect x={s[0]} y="561" width={s[1]} height="2" fill={s[2]} />
      {/each}
      <text x="163" y="510" class="lbl dark">END - 2 1.7143 0.0000 0.0000 0.0000  ForexCounterAttack Filter 0.0000  ForexCounterAttack Filter 0.0000  H1 Didi index 1.0074 1.0000 1.0010</text>

      <!-- volume pane -->
      <line x1="5" x2="1056" y1="574.500" y2="574.500" stroke="#f00" stroke-width="2" />
      <line x1="5" x2="1056" y1="582.500" y2="582.500" stroke="#008000" />
      <line x1="5" x2="1056" y1="617.500" y2="617.500" stroke="#a52a2a" />
      {#each grayBars as b}
        <rect x={b[0]} y={b[1] < 0 ? 600 + b[1] : 600} width="1.500" height={Math.abs(b[1])} fill="#dedede" />
      {/each}
      {#each orangeBars as b}
        <rect x={b[0]} y={b[1]} width={b[2]} height={b[3]} fill="#d2691e" />
      {/each}
      {#each redSpikes as s}
        <line x1={s[0]} x2={s[0]} y1={s[1]} y2={s[2]} stroke="#f00" stroke-width="3" />
      {/each}
      <rect x="883" y="600" width="3" height="37" fill="#f00" />
      <line x1="160" x2="1321" y1="600.500" y2="600.500" stroke="#ffff00" stroke-width="2" />
      <text x="163" y="582" class="lbl dark">VolB</text>

      <!-- signal rows -->
      <rect x="5" y="642" width="1051" height="3" fill="#c0c0c0" />
      <rect x="5" y="648" width="1051" height="3" fill="#c0c0c0" />
      {#each row1 as s}
        <rect x={s[0]} y="642" width={s[1]} height="3" fill={s[2]} />
      {/each}
      {#each row2 as s}
        <rect x={s[0]} y="648" width={s[1]} height="3" fill={s[2]} />
      {/each}
      <path d={status} fill="none" stroke="#000" stroke-width="4" stroke-linejoin="round" />
      <path d={status} fill="none" stroke="#fff" />

      <!-- axes -->
      {#each axis as a}
        <text x="1325" y={a[1]} class="lbl dark">{a[0]}</text>
      {/each}
      <rect x="1322" y="235" width="34" height="12" fill="#2f4f4f" />
      <text x="1326" y="245" class="lbl light">16615</text>
      <rect x="1322" y="594" width="7" height="13" fill="#ffff00" />
      <text x="1323" y="604" class="lbl dark">0</text>

      {#each times as t, i}
        <line x1={4.5 + i * 64} x2={4.5 + i * 64} y1="672" y2="678" stroke="#2f4f4f" />
        <text x={5 + i * 64} y="685" class="lbl dark">{t}</text>
      {/each}
      <path d="M1025 68l5 5 5-5z" fill="#cfcfcf" />
    </svg>

    <div class="dialog">
      <div class="dlg-title">
        <span class="q">?</span>
        <svg width="12" height="12" viewBox="0 0 12 12"><path d="M1 1l10 10M11 1L1 11" stroke="#777" /></svg>
      </div>
      <div class="dlg-body">
        <div class="msg">
          <span>di_index trend changed to u</span>
          <div class="mini">
            <svg width="10" height="7" viewBox="0 0 10 7"><path d="M1 6l4-4 4 4" fill="none" stroke="#bbb" stroke-width="2" /></svg>
            <svg width="10" height="7" viewBox="0 0 10 7"><path d="M1 1l4 4 4-4" fill="none" stroke="#bbb" stroke-width="2" /></svg>
          </div>
        </div>
        <div class="list">
          <div class="rows">
            <div class="row alt">:15 Didi_index trend cha...</div>
            <div class="row">:15 crossed 0.05 line up</div>
            <div class="row alt">:14 GANN SSL TF+1 cha...</div>
            <div class="row"></div>
          </div>
          <div class="bar">
            <svg width="10" height="7" viewBox="0 0 10 7"><path d="M1 6l4-4 4 4" fill="none" stroke="#555" stroke-width="2" /></svg>
            <div class="thumb"></div>
            <svg width="10" height="7" viewBox="0 0 10 7"><path d="M1 1l4 4 4-4" fill="none" stroke="#555" stroke-width="2" /></svg>
          </div>
        </div>
        <div class="dlg-btn"></div>
      </div>
    </div>
  </main>

  <div class="tabs">
    {#each tabs as t}
      <div class="tab {t[1]}">{t[0]}</div>
    {/each}
    <div class="tab last">Ita40D</div>
    <span class="tab-arrow dim">◂</span>
    <span class="tab-arrow">▸</span>
  </div>

  <footer class="status">
    <span class="hint">Per aiuto, premi F1</span>
    <span class="cell w115">Default</span>
    {#each statusCells.slice(1) as c}
      <span class="cell {c}"></span>
    {/each}
    <span class="cell net">
      <svg width="24" height="14" viewBox="0 0 24 14">
        <path d="M1 1h22" stroke="#6b7d12" stroke-width="3" stroke-dasharray="2 1" />
        <path d="M1.500 14V7M4.500 14V7M7.500 14V7M10.500 14V6" stroke="#2a5e8c" stroke-width="2" />
        <path d="M13.500 14V4M16.500 14V3M19.500 14V3M22.500 14V3" stroke="#2a6e9c" stroke-width="2" />
      </svg>
      1924/3 kb
    </span>
  </footer>
</div>

<style>
  :global(body) { margin: 0; background: #f0f0f0; overflow: hidden; }
  .app { width: 1366px; height: 738px; display: flex; flex-direction: column; font-family: "Liberation Sans", Arial, sans-serif; color: #111; overflow: hidden; }

  .title { height: 20px; background: #c337ae; display: flex; align-items: center; padding-left: 5px; flex: none; }
  .logo { margin-right: 3px; }
  .title-text { color: #fff; font: 600 13px "Open Sans", sans-serif; white-space: nowrap; }
  .win { margin-left: auto; display: flex; gap: 30px; padding-right: 13px; }

  .menu { height: 21px; background: #f0f0f0; display: flex; align-items: center; padding-left: 5px; font-size: 11.300px; flex: none; position: relative; }
  .mdi { margin-right: 7px; }
  .menu span { margin-right: 18px; }
  .menu span.wide { margin-right: 23px; }
  .mdi-btns { margin-left: auto; display: flex; gap: 2px; }
  .mdi-btns button { width: 17px; height: 17px; padding: 0; border: 0; background: #fff; display: flex; align-items: center; justify-content: center; }

  .toolbar { height: 26px; background: #f0f0f0; border-top: 1px solid #a9a9a9; border-bottom: 1px solid #a0a0a0; box-sizing: content-box; display: flex; align-items: center; padding-left: 4px; flex: none; }
  .tool { width: 28px; height: 25px; display: flex; align-items: center; justify-content: center; flex: none; box-sizing: border-box; }
  .tool.on, .period.on { background: #f8f8f8; border: 1px solid #bdbdbd; border-bottom-color: #fff; border-right-color: #fff; }
  .dd { width: 9px; flex: none; display: flex; justify-content: center; }
  .dd.small { width: 6px; }
  .dd i { border: 3px solid transparent; border-top: 4px solid #111; margin-top: 4px; }
  .sep { height: 22px; border-right: 1px solid #b5b5b5; flex: none; box-sizing: border-box; }
  .w10 { width: 10px; } .w5 { width: 5px; } .w4 { width: 4px; } .w7 { width: 7px; } .w9 { width: 9px; } .w8 { width: 8px; } .w3 { width: 3px; } .w11 { width: 11px; }
  .grip { height: 22px; flex: none; background: repeating-linear-gradient(#aaa 0 1px, transparent 1px 3px) 2px 0 / 2px 100% no-repeat; }
  .order { width: 107px; flex: none; display: flex; align-items: center; font-size: 11.800px; padding-left: 9px; box-sizing: border-box; gap: 1px; }
  .period { width: 28px; height: 25px; flex: none; text-align: center; line-height: 24px; font-size: 9.500px; color: #444; box-sizing: border-box; }
  .tool.push { margin-left: 16px; }
  .tool.chat { margin-left: 4px; }

  .chart { height: 626px; flex: none; background: #a9a9a9; position: relative; overflow: hidden; }
  .plot { display: block; shape-rendering: crispEdges; }
  .grid { stroke: #2f4f4f; stroke-dasharray: 3 5; }
  .soft { stroke: #d4d4d4; stroke-dasharray: 4 3; }
  .dash { stroke-dasharray: 5 3; }
  .lbl { font-family: "Liberation Sans", Arial, sans-serif; font-size: 9.300px; }
  .dark { fill: #2f4f4f; }
  .light { fill: #fff; }
  .teal { fill: #008080; }
  .rust { fill: #a0522d; text-anchor: end; }
  .big { font-family: "Liberation Sans", Arial, sans-serif; font-size: 64px; fill: #ff4500; }
  .trainind { font-family: "Liberation Sans", Arial, sans-serif; font-size: 12px; fill: #0000cd; }
  .warn { font-family: "Liberation Sans", Arial, sans-serif; font-size: 16px; fill: #0000cd; }
  .tag { font-family: "Liberation Sans", Arial, sans-serif; font-size: 11px; text-anchor: middle; }

  .dialog { position: absolute; left: 0; top: 367px; width: 161px; height: 232px; background: #f0f0f0; box-shadow: 3px 0 4px rgba(0, 0, 0, 0.25); display: flex; flex-direction: column; font-size: 11px; }
  .dlg-title { height: 27px; flex: none; background: #fff; display: flex; align-items: center; justify-content: flex-end; padding-right: 13px; gap: 29px; }
  .q { font: 14px "Liberation Sans", sans-serif; color: #999; }
  .dlg-body { flex: 1; display: flex; flex-direction: column; }
  .msg { height: 57px; margin-top: 15px; display: flex; white-space: nowrap; overflow: hidden; }
  .msg span { width: 136px; overflow: hidden; flex: none; border-right: 1px solid #ddd; }
  .mini { flex: 1; display: flex; flex-direction: column; justify-content: space-between; align-items: center; padding: 7px 0 15px; }
  .list { height: 85px; width: 152px; margin-top: 7px; border: 1px solid #999; border-left: 0; box-sizing: border-box; display: flex; background: #fff; }
  .rows { flex: 1; padding: 1px 2px 0 0; overflow: hidden; }
  .row { height: 20px; line-height: 19px; white-space: nowrap; overflow: hidden; padding-left: 1px; box-sizing: border-box; }
  .row.alt { background: #e8e8e8; border-bottom: 1px solid #ccc; }
  .bar { width: 16px; background: #f0f0f0; display: flex; flex-direction: column; align-items: center; padding: 8px 0 7px; box-sizing: border-box; }
  .thumb { width: 15px; height: 17px; background: #cdcdcd; margin: 5px 0 auto; }
  .dlg-btn { width: 9px; height: 21px; margin-top: 11px; background: #e1e1e1; border: 1px solid #adadad; border-left: 0; }

  .tabs { height: 21px; flex: none; background: #f0f0f0; border-top: 1px solid #000; box-sizing: border-box; display: flex; align-items: center; padding-left: 2px; font-size: 11.100px; color: #444; position: relative; white-space: nowrap; }
  .tab { text-align: center; box-sizing: border-box; border-right: 1px solid #9a9a9a; height: 15px; line-height: 15px; flex: none; }
  .w115 { width: 115px; } .w120 { width: 120px; } .w105 { width: 105px; } .w103 { width: 103px; } .w124 { width: 124px; } .w97 { width: 97px; } .w96 { width: 96px; }
  .w102 { width: 102px; } .w71 { width: 71px; } .w68 { width: 68px; } .w67 { width: 67px; }
  .tab.active { width: 95px; height: 21px; line-height: 19px; margin-top: -1px; background: #fff; color: #000; border: 1px solid #000; }
  .tab.last { border-right: 0; padding-left: 7px; width: 42px; text-align: left; }
  .tab-arrow { position: absolute; right: 7px; font-size: 10px; color: #111; }
  .tab-arrow.dim { right: 26px; color: #888; }

  .status { height: 22px; flex: none; background: #f0f0f0; display: flex; align-items: center; font-size: 11.500px; }
  .hint { width: 676px; padding-left: 2px; box-sizing: border-box; flex: none; }
  .cell { height: 17px; line-height: 17px; padding-left: 2px; box-sizing: border-box; border-right: 1px solid #a0a0a0; flex: none; }
  .cell.net { border: 0; display: flex; align-items: center; gap: 5px; padding-left: 3px; }
</style>
